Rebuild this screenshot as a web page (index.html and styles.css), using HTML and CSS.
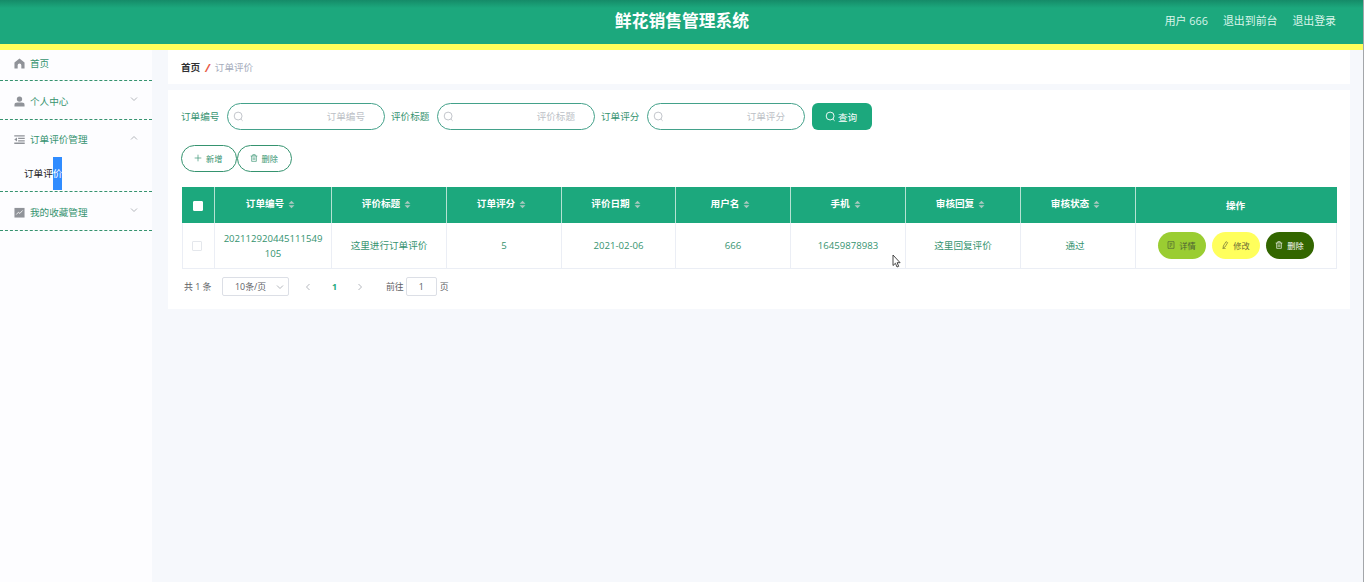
FILE: index.html
```html
<!DOCTYPE html>
<html lang="zh-CN">
<head>
    <meta charset="UTF-8">
    <meta name="viewport" content="width=device-width, initial-scale=1.0">
    <title>鲜花销售管理系统</title>
    <link rel="stylesheet" href="styles.css">
</head>
<body>

<!-- Shared icons -->
<svg class="sprite" width="0" height="0">
    <symbol id="search" viewBox="0 0 12 12"><circle cx="5.600" cy="5.500" r="4.300" fill="none" stroke="currentColor"/><path d="M8.500 8.700l2 2" fill="none" stroke="currentColor"/></symbol>
    <symbol id="trash" viewBox="0 0 12 12"><path d="M1 3h10M2.5 3v8h7V3M4.2 3V1h3.6v2M4.8 5v4M7.2 5v4" fill="none" stroke="currentColor"/></symbol>
    <symbol id="down" viewBox="0 0 8 8"><path d="M1 2.5l3 3 3-3" fill="none" stroke="currentColor"/></symbol>
    <symbol id="sort" viewBox="0 0 8 10"><path d="M4 .8L7.4 4.2H.6zM4 9.2L.6 5.8h6.8z" fill="currentColor"/></symbol>
</svg>

<header class="header">
    <h1>鲜花销售管理系统</h1>
    <nav class="user-nav">
        <span>用户 666</span>
        <span>退出到前台</span>
        <span>退出登录</span>
    </nav>
</header>

<div class="container">
    <!-- Side menu -->
    <aside class="sidebar">
        <div class="menu-item first">
            <svg class="menu-icon" viewBox="0 0 12 12"><path d="M6 .5L11.500 5v6.500H8V8a2 2 0 0 0-4 0v3.500H.5V5z"/></svg>
            <span>首页</span>
        </div>
        <div class="menu-item">
            <svg class="menu-icon" viewBox="0 0 12 12"><circle cx="6" cy="3.4" r="2.9"/><path d="M.5 11.500V9.800Q.5 7.200 3.600 7.200h4.800q3.100 0 3.100 2.600v1.700z"/></svg>
            <span>个人中心</span>
            <svg class="arrow"><use href="#down"/></svg>
        </div>
        <div class="menu-group">
            <div class="menu-item">
                <svg class="menu-icon" viewBox="0 0 12 12"><path d="M.3 1.3h11.400v1.400H.3zM4.500 4h7.200v1.400H4.500zM4.500 6.700h7.200v1.400H4.500zM.3 9.400h11.400v1.400H.3zM.3 6l3-2.100v4.200z"/></svg>
                <span>订单评价管理</span>
                <svg class="arrow up"><use href="#down"/></svg>
            </div>
            <div class="sub-item">订单评<span class="selected">价</span></div>
        </div>
        <div class="menu-item">
            <svg class="menu-icon" viewBox="0 0 12 12"><path d="M.5 1h11v10.500H.5z"/><path d="M2.5 8.200l2.300-2.500 1.600 1.300 3-3.200" fill="none" stroke="#fff" stroke-width=".9"/></svg>
            <span>我的收藏管理</span>
            <svg class="arrow"><use href="#down"/></svg>
        </div>
    </aside>

    <main class="main">
        <div class="breadcrumb">
            <b>首页</b><i>/</i><span>订单评价</span>
        </div>

        <section class="content">
            <!-- Search form -->
            <form class="search-form">
                <label>订单编号</label>
                <div class="field"><svg><use href="#search"/></svg><span>订单编号</span></div>
                <label>评价标题</label>
                <div class="field"><svg><use href="#search"/></svg><span>评价标题</span></div>
                <label>订单评分</label>
                <div class="field"><svg><use href="#search"/></svg><span>订单评分</span></div>
                <button type="button" class="btn-search"><svg><use href="#search"/></svg>查询</button>
            </form>

            <div class="toolbar">
                <button type="button" class="btn"><svg viewBox="0 0 12 12"><path d="M6 1v10M1 6h10" fill="none" stroke="currentColor"/></svg>新增</button>
                <button type="button" class="btn"><svg><use href="#trash"/></svg>删除</button>
            </div>

            <table class="table">
                <colgroup>
                    <col class="w-check"><col class="w-id"><col class="w-mid"><col class="w-mid"><col class="w-date">
                    <col class="w-mid"><col class="w-mid"><col class="w-mid"><col class="w-mid"><col class="w-actions">
                </colgroup>
                <thead>
                    <tr>
                        <th class="check"><span class="checkbox"></span></th>
                        <th>订单编号<svg><use href="#sort"/></svg></th>
                        <th>评价标题<svg><use href="#sort"/></svg></th>
                        <th>订单评分<svg><use href="#sort"/></svg></th>
                        <th>评价日期<svg><use href="#sort"/></svg></th>
                        <th>用户名<svg><use href="#sort"/></svg></th>
                        <th>手机<svg><use href="#sort"/></svg></th>
                        <th>审核回复<svg><use href="#sort"/></svg></th>
                        <th>审核状态<svg><use href="#sort"/></svg></th>
                        <th class="plain">操作</th>
                    </tr>
                </thead>
                <tbody>
                    <tr>
                        <td class="check"><span class="checkbox"></span></td>
                        <td>202112920445111549<br>105</td>
                        <td>这里进行订单评价</td>
                        <td>5</td>
                        <td>2021-02-06</td>
                        <td>666</td>
                        <td>16459878983</td>
                        <td>这里回复评价</td>
                        <td class="status">通过</td>
                        <td>
                            <div class="actions">
                                <button type="button" class="btn detail"><svg viewBox="0 0 12 12"><path d="M1.5 1h9v10h-9zM4 4h4M4 6h4M4 8h2" fill="none" stroke="currentColor"/></svg>详情</button>
                                <button type="button" class="btn edit"><svg viewBox="0 0 12 12"><path d="M3.500 7.500L7.500 1l2.500 1.500-4 6.500-2.800 1.500zM2 11.500h5" fill="none" stroke="currentColor"/></svg>修改</button>
                                <button type="button" class="btn remove"><svg><use href="#trash"/></svg>删除</button>
                            </div>
                        </td>
                    </tr>
                </tbody>
            </table>

            <div class="pagination">
                <span class="total">共 1 条</span>
                <div class="page-size">10条/页<svg><use href="#down"/></svg></div>
                <svg class="prev"><use href="#down"/></svg>
                <b>1</b>
                <svg class="next"><use href="#down"/></svg>
                <span>前往</span>
                <div class="page-input">1</div>
                <span>页</span>
            </div>
        </section>
    </main>
</div>

<svg class="cursor" viewBox="0 0 9 14"><path d="M1 1v10.500l2.400-2.200 1.600 3.700 1.700-.7-1.600-3.600h3z" fill="#fff" stroke="#333" stroke-width=".9"/></svg>

</body>
</html>
```

FILE: styles.css
```css
* {
    box-sizing: border-box;
}

body {
    margin: 0;
    height: 582px;
    overflow: hidden;
    font-family: "Open Sans", "Noto Sans CJK SC", sans-serif;
    font-size: 9.6px;
    line-height: 15px;
    color: #35936f;
    background-color: #f6f8fc;
    border-right: 1px solid #a3a6aa;
}

button {
    font-family: inherit;
    cursor: pointer;
}

svg {
    flex: none;
}

.sprite {
    position: absolute;
}

/* Header */
.header {
    display: grid;
    grid-template-columns: 1fr auto 1fr;
    align-items: center;
    height: 50px;
    padding: 0 27px 3px 28px;
    color: #fff;
    background: linear-gradient(#158b68, #1ca87d 8px);
    border-bottom: 6px solid #ffff5c;
}

.header h1 {
    grid-column: 2;
    margin: 0;
    font-size: 16.8px;
    line-height: 24px;
}

.user-nav {
    display: flex;
    justify-content: flex-end;
    gap: 15px;
    font-size: 10.9px;
    color: #d9f5ea;
}

.container {
    display: flex;
    height: 532px;
}

/* Side menu */
.sidebar {
    width: 152px;
    background-color: #fdfdff;
}

.menu-item {
    display: flex;
    align-items: center;
    height: 39px;
    padding: 2px 14px 0 14px;
    border-bottom: 1px dashed #35936f;
}

.menu-item.first {
    height: 31px;
    padding-bottom: 6px;
}

.menu-icon {
    width: 11px;
    height: 11px;
    margin-right: 5px;
    fill: #909399;
}

.arrow {
    width: 8px;
    height: 8px;
    margin-left: auto;
    color: #b4b7bc;
    transform: translateY(-2px);
}

.arrow.up {
    transform: translateY(-2px) rotate(180deg);
}

.menu-group {
    height: 72px;
    border-bottom: 1px dashed #35936f;
}

.menu-group .menu-item {
    height: 37px;
    border: 0;
}

.sub-item {
    padding-left: 24px;
    line-height: 33px;
    color: #222;
}

.selected {
    display: inline-block;
    height: 33px;
    color: #fff;
    background-color: #308cff;
}

/* Content */
.main {
    flex: 1;
    padding: 0 13px 0 16px;
}

.breadcrumb {
    display: flex;
    align-items: center;
    height: 34px;
    padding-left: 13px;
    background-color: #fff;
}

.breadcrumb b {
    color: #303133;
}

.breadcrumb i {
    margin: 0 5px;
    font-size: 11px;
    font-weight: bold;
    color: #e85b48;
}

.breadcrumb span {
    color: #a5acbb;
}

.content {
    height: 219px;
    margin-top: 6px;
    padding: 13px 13px 0;
    background-color: #fff;
}

.search-form {
    display: flex;
    align-items: center;
    height: 27px;
}

.search-form label {
    width: 38px;
    margin-right: 8px;
    white-space: nowrap;
}

.field {
    display: flex;
    align-items: center;
    justify-content: space-between;
    width: 158px;
    height: 27px;
    margin-right: 6px;
    padding: 0 19px 0 5px;
    color: #bcbfc6;
    border: 1px solid #43a18a;
    border-radius: 14px;
}

.field svg,
.btn-search svg {
    width: 11px;
    height: 11px;
}

.btn-search {
    display: flex;
    align-items: center;
    justify-content: center;
    gap: 2px;
    width: 60px;
    height: 27px;
    margin-left: 1px;
    padding: 0 2px 0 0;
    font-size: 9.6px;
    color: #fff;
    background-color: #1ca87d;
    border: 0;
    border-radius: 6px;
}

.toolbar {
    display: flex;
    margin-top: 15px;
}

.btn {
    display: flex;
    align-items: center;
    justify-content: center;
    gap: 4px;
    width: 55.5px;
    height: 27px;
    padding: 0 1px 2px 0;
    font-size: 8.2px;
    color: #35936f;
    background-color: #fff;
    border: 1px solid #35936f;
    border-radius: 14px;
}

.btn svg {
    width: 8px;
    height: 8px;
}

/* Table */
.table {
    width: 1155px;
    margin: 15px 0 0 1px;
    table-layout: fixed;
    border-collapse: separate;
    border-spacing: 0;
    text-align: center;
}

.w-check {
    width: 33px;
}

.w-id {
    width: 117px;
}

.w-mid {
    width: 115px;
}

.w-date {
    width: 114px;
}

.w-actions {
    width: 201px;
}

.table th {
    height: 36px;
    padding: 0 5px 3px 0;
    color: #fff;
    background-color: #1ca87d;
    border-right: 1px solid #b5e2d3;
}

.table th.check {
    padding-right: 0;
}

.table th.plain {
    padding: 0 1px 0 0;
    border-right-color: #1ca87d;
}

.table th svg {
    width: 7px;
    height: 9px;
    margin-left: 4px;
    vertical-align: -2px;
    color: #a8c9be;
}

.table td {
    height: 46px;
    padding: 0;
    border-right: 1px solid #ebeef5;
    border-bottom: 1px solid #ebeef5;
}

.table td.check {
    padding-right: 3px;
    border-left: 1px solid #ebeef5;
}

.table td.status {
    padding-right: 6px;
}

.checkbox {
    display: inline-block;
    width: 10px;
    height: 10px;
    vertical-align: middle;
    background-color: #fff;
    border: 1px solid #e4e7ec;
    border-radius: 1px;
}

th .checkbox {
    margin-top: 4px;
    border-color: #fff;
}

.actions {
    display: flex;
    justify-content: center;
    gap: 6px;
}

.actions .btn {
    width: 48px;
    color: #4c6134;
    border: 0;
}

.actions .detail {
    background-color: #9acd32;
}

.actions .edit {
    color: #6b6b35;
    background-color: #ffff5c;
}

.actions .remove {
    color: #fff;
    background-color: #336600;
}

/* Pagination */
.pagination {
    display: flex;
    align-items: center;
    height: 19px;
    margin-top: 8px;
    padding-left: 3px;
    font-size: 8.9px;
    color: #606266;
}

.pagination svg {
    width: 8px;
    height: 8px;
    color: #b4b7bd;
}

.total {
    width: 38px;
    white-space: nowrap;
}

.page-size {
    display: flex;
    align-items: center;
    justify-content: space-between;
    width: 67px;
    height: 19px;
    padding: 0 4px 0 12px;
    line-height: 17px;
    border: 1px solid #dcdfe6;
    border-radius: 2px;
}

.pagination .prev {
    margin: 0 20px 0 15px;
    transform: rotate(90deg);
}

.pagination b {
    width: 6px;
    color: #1ca87d;
}

.pagination .next {
    margin: 0 22px 0 18px;
    transform: rotate(-90deg);
}

.page-input {
    width: 31px;
    height: 19px;
    margin: 0 3px 0 2px;
    line-height: 17px;
    text-align: center;
    border: 1px solid #dcdfe6;
    border-radius: 2px;
}

/* Mouse pointer above the page */
.cursor {
    position: absolute;
    left: 892px;
    top: 254px;
    width: 9px;
    height: 14px;
}
```
